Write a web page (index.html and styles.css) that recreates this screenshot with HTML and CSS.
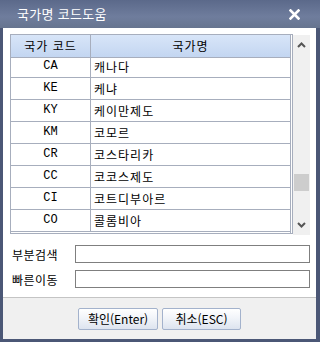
FILE: index.html
```html
<!DOCTYPE html>
<html lang="ko">
<head>
<meta charset="UTF-8">
<title>국가명 코드도움</title>
<link rel="stylesheet" href="styles.css">
</head>
<body>

<div class="dialog">
  <div class="titlebar">
    <span class="title">국가명 코드도움</span>
    <svg class="close" width="11" height="11" viewBox="0 0 11 11">
      <path d="M1.5 1.5 L9.5 9.5 M9.5 1.5 L1.5 9.5" stroke="#fff" stroke-width="2.6" stroke-linecap="square"/>
    </svg>
  </div>

  <div class="content">
    <div class="list">
      <div class="grid">
        <div class="grid-inner">
          <div class="row head">
            <div class="c-code">국가 코드</div>
            <div class="c-name">국가명</div>
          </div>
          <div class="rows">
            <div class="row first"><div class="c-code">CA</div><div class="c-name">캐나다</div></div>
            <div class="row"><div class="c-code">KE</div><div class="c-name">케냐</div></div>
            <div class="row"><div class="c-code">KY</div><div class="c-name">케이만제도</div></div>
            <div class="row"><div class="c-code">KM</div><div class="c-name">코모르</div></div>
            <div class="row"><div class="c-code">CR</div><div class="c-name">코스타리카</div></div>
            <div class="row"><div class="c-code">CC</div><div class="c-name">코코스제도</div></div>
            <div class="row"><div class="c-code">CI</div><div class="c-name">코트디부아르</div></div>
            <div class="row"><div class="c-code">CO</div><div class="c-name">콜롬비아</div></div>
          </div>
        </div>
      </div>
      <div class="scrollbar">
        <svg class="arrow" width="9" height="6" viewBox="0 0 9 6">
          <path d="M1 5 L4.5 1.5 L8 5" fill="none" stroke="#555" stroke-width="2"/>
        </svg>
        <div class="track"><div class="thumb"></div></div>
        <svg class="arrow" width="9" height="6" viewBox="0 0 9 6">
          <path d="M1 1 L4.5 4.5 L8 1" fill="none" stroke="#555" stroke-width="2"/>
        </svg>
      </div>
    </div>

    <div class="field">
      <label for="search">부분검색</label>
      <input type="text" id="search">
    </div>
    <div class="field">
      <label for="jump">빠른이동</label>
      <input type="text" id="jump">
    </div>
  </div>

  <div class="footer">
    <button class="btn ok">확인(Enter)</button>
    <button class="btn cancel">취소(ESC)</button>
  </div>
</div>

</body>
</html>
```

FILE: styles.css
```css
body {
  margin: 0;
  font-family: "Noto Sans CJK KR", "Liberation Sans", sans-serif;
  font-size: 12px;
  color: #000;
}
.dialog {
  width: 320px;
  height: 342px;
  box-sizing: border-box;
  background-color: #4b5776;
  padding: 0 4px 3px 3px;
  display: flex;
  flex-direction: column;
}
.titlebar {
  margin: 0 -4px 0 -3px;
  height: 28px;
  flex: none;
  background: linear-gradient(#5b698a, #6f7d9d 60%, #66748f);
  display: flex;
  align-items: center;
  justify-content: space-between;
  padding: 0 20px 0 17px;
}
.title {
  color: #fff;
  font-size: 13px;
  line-height: 16px;
  letter-spacing: 0.3px;
}
.close {
  display: block;
  margin-top: 1px;
}
.content {
  background-color: #fff;
  flex: none;
  border-bottom: 1px solid #c4c4c4;
  padding: 6px 6px 0 7px;
  box-sizing: border-box;
  height: 270px;
}
.list {
  display: flex;
  align-items: flex-start;
}
.grid {
  width: 283px;
  height: 200px;
  box-sizing: border-box;
  border: 1px solid #a7aebd;
  padding: 0 1px 1px 0;
  letter-spacing: 1px;
}
.grid-inner {
  border-right: 1px solid #a7aebd;
  height: 198px;
}
.row {
  display: flex;
  height: 21px;
  border-bottom: 1px solid #a7aebd;
  line-height: 21px;
}
.row.head {
  height: 22px;
  line-height: 22px;
  background: linear-gradient(#d8e5f8, #c3d6f1);
}
.rows {
  height: 174px;
  overflow: hidden;
}
.row.first {
  margin-top: -2px;
}
.c-code {
  width: 79px;
  border-right: 1px solid #a7aebd;
  text-align: center;
  flex: none;
}
.rows .c-code {
  font-family: "Liberation Mono", monospace;
  font-size: 12px;
  letter-spacing: 0;
}
.c-name {
  flex: 1;
  padding-left: 3px;
}
.head .c-name {
  text-align: center;
  padding-left: 0;
}
.scrollbar {
  width: 17px;
  height: 200px;
  margin-top: 1px;
  background-color: #f0f0f0;
  display: flex;
  flex-direction: column;
  align-items: center;
}
.arrow {
  display: block;
  margin: 7px 0;
  flex: none;
}
.track {
  flex: 1;
  width: 100%;
  position: relative;
}
.thumb {
  position: absolute;
  left: 1px;
  right: 1px;
  top: 119px;
  height: 17px;
  background-color: #cdcdcd;
}
.field {
  display: flex;
  align-items: center;
  margin-top: 7px;
  height: 18px;
}
.list + .field {
  margin-top: 10px;
}
.field label {
  width: 63px;
  padding-left: 2px;
  font-size: 12px;
  letter-spacing: 0.5px;
}
.field input {
  width: 236px;
  height: 18px;
  box-sizing: border-box;
  border: 1px solid #7f7f7f;
  margin: 0;
  padding: 0 2px;
  outline: none;
}
.footer {
  flex: 1;
  background-color: #f0f0f0;
  display: flex;
  justify-content: center;
  align-items: flex-start;
  gap: 4px;
  padding-top: 10px;
}
.btn {
  height: 22px;
  border: 1px solid #a3b2cc;
  border-radius: 2px;
  background: linear-gradient(#ffffff, #f1f4f9 45%, #dde4ef);
  font-family: "Noto Sans CJK KR", "Liberation Sans", sans-serif;
  font-size: 12px;
  line-height: 18px;
  padding: 0;
  color: #000;
  cursor: pointer;
}
.btn.ok {
  width: 80px;
}
.btn.cancel {
  width: 79px;
}
```
